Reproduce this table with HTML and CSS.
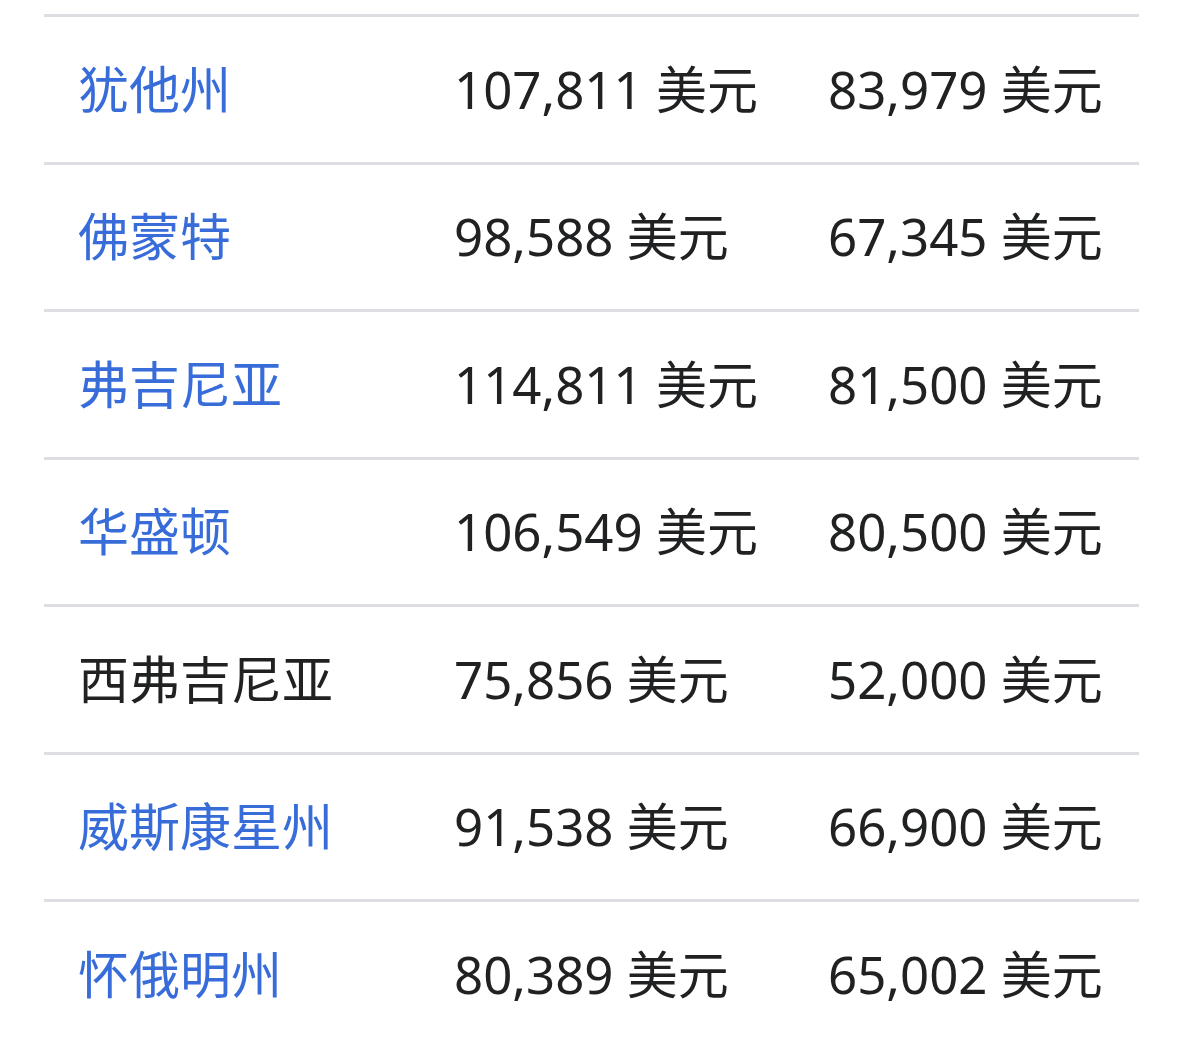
FILE: index.html
```html
<!DOCTYPE html>
<html lang="zh">
<head>
<meta charset="utf-8">
<title>州收入</title>
<link rel="stylesheet" href="styles.css">
</head>
<body>
<div class="table">
  <div class="row"><div class="cell"><a class="link">犹他州</a></div><div class="cell">107,811 美元</div><div class="cell">83,979 美元</div></div>
  <div class="row"><div class="cell"><a class="link">佛蒙特</a></div><div class="cell">98,588 美元</div><div class="cell">67,345 美元</div></div>
  <div class="row"><div class="cell"><a class="link">弗吉尼亚</a></div><div class="cell">114,811 美元</div><div class="cell">81,500 美元</div></div>
  <div class="row"><div class="cell"><a class="link">华盛顿</a></div><div class="cell">106,549 美元</div><div class="cell">80,500 美元</div></div>
  <div class="row"><div class="cell">西弗吉尼亚</div><div class="cell">75,856 美元</div><div class="cell">52,000 美元</div></div>
  <div class="row"><div class="cell"><a class="link">威斯康星州</a></div><div class="cell">91,538 美元</div><div class="cell">66,900 美元</div></div>
  <div class="row"><div class="cell"><a class="link">怀俄明州</a></div><div class="cell">80,389 美元</div><div class="cell">65,002 美元</div></div>
</div>
</body>
</html>
```
FILE: styles.css
```css
html, body {
  margin: 0;
  padding: 0;
  background: #ffffff;
}
body {
  font-family: "Noto Sans", "Noto Sans CJK SC", sans-serif;
  font-size: 51px;
  color: #202122;
}
.table {
  margin: 14px 43px 0 44px;
}
.row {
  display: grid;
  grid-template-columns: 376px 374px 1fr;
  height: 144.5px;
  border-top: 3px solid #dcdee2;
  align-items: center;
}
.cell {
  padding: 0 34px;
  white-space: nowrap;
  line-height: 1.2;
}
.link {
  color: #376cd9;
  text-decoration: none;
}
```
